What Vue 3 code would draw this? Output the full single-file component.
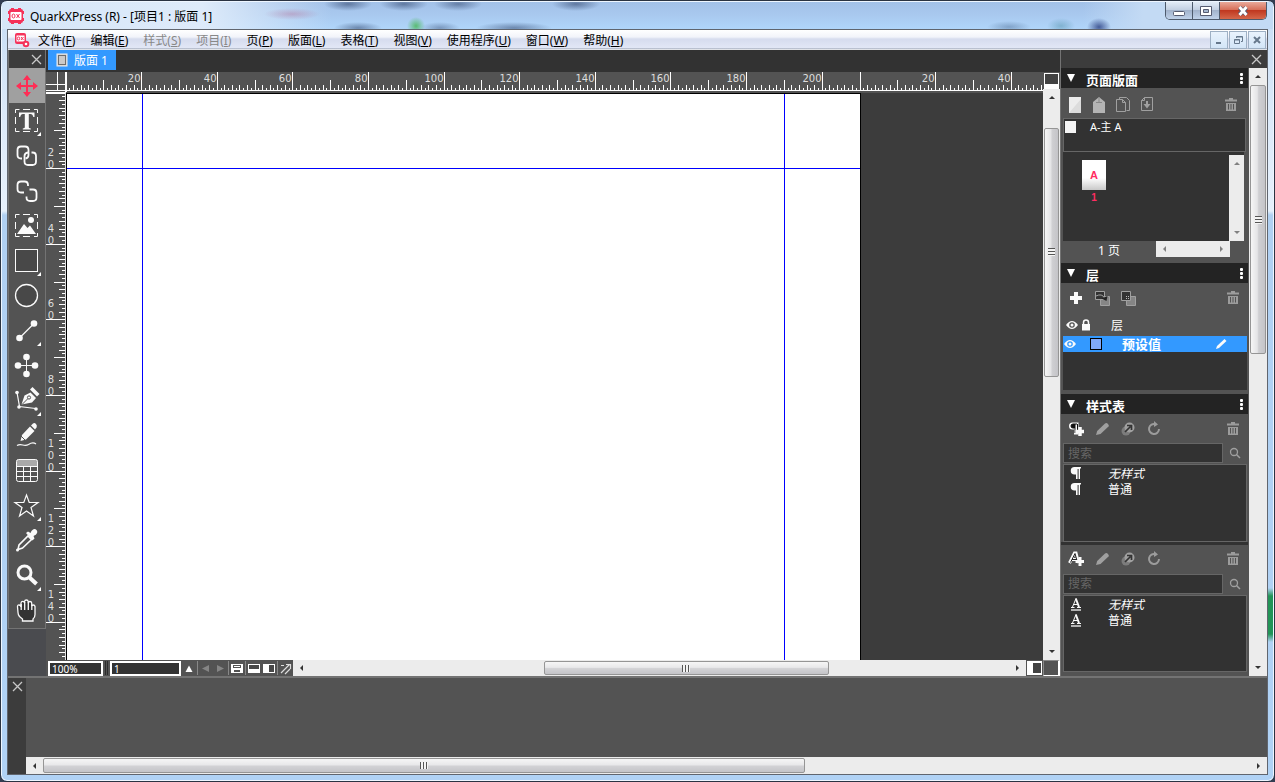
<script setup>
import { computed, onBeforeUnmount, onMounted, ref } from 'vue'

const menus = [
  { label: '文件', key: 'F' },
  { label: '编辑', key: 'E' },
  { label: '样式', key: 'S', disabled: true },
  { label: '项目', key: 'I', disabled: true },
  { label: '页', key: 'P' },
  { label: '版面', key: 'L' },
  { label: '表格', key: 'T' },
  { label: '视图', key: 'V' },
  { label: '使用程序', key: 'U' },
  { label: '窗口', key: 'W' },
  { label: '帮助', key: 'H' },
]

const frame = '<path d="M6.500 10V6.500h4M14 6.500h7M25 6.500h3.500V10M28.500 14v7M28.500 25v3.500H25M21 28.500h-7M10.500 28.500H6.500V25M6.500 21v-7" fill="none" stroke="#fafafa"/>'
const tools = [
  { name: '移动工具', art: '<path d="M18 9v18M9 18h18" stroke="#ff2d55" stroke-width="2" fill="none"/><path d="M18 7l-4 5h8zM18 29l-4-5h8zM7 18l5-4v8zM29 18l-5-4v8z" fill="#ff2d55"/>' },
  { name: '文本工具', more: true, art: frame + '<path d="M10 9.500h15.500v4.500h-1.200c-.4-2-1.300-3-2.800-3h-1.700v13c0 1 .7 1.400 2 1.500v1h-8v-1c1.300-.1 2-.5 2-1.500V11H14c-1.500 0-2.400 1-2.800 3H10z" fill="#fafafa"/>' },
  { name: '链接工具', art: '<g fill="none" stroke="#fafafa" stroke-width="1.800"><path d="M13 20.500h-1q-3.500 0-3.500-3.500v-5q0-3.500 3.500-3.500h4q3.500 0 3.500 3.500v5q0 3-3 3.500"/><path d="M22.500 14.500h1q3.500 0 3.500 3.500v5.500q0 3.500-3.500 3.500H19q-3.500 0-3.500-3.500V18q0-3 3.500-3.500"/></g>' },
  { name: '取消链接工具', art: '<g fill="none" stroke="#fafafa" stroke-width="1.800"><path d="M15 19.500h-3q-3.500 0-3.500-3.500v-4q0-3.500 3.500-3.500h3.500q3.500 0 3.500 3.500v1"/><path d="M20.500 16.500H24q3.500 0 3.500 3.500v4.500q0 3.500-3.500 3.500h-3q-3.500 0-3.500-3.500v-1"/></g>' },
  { name: '图片工具', art: frame + '<path d="M8 26l7-10 3.500 4 2.500-2.500 6 8.500z" fill="#fafafa"/><circle cx="22" cy="12" r="3" fill="#fafafa"/>' },
  { name: '矩形工具', more: true, art: '<rect x="6.500" y="6.500" width="22" height="22" fill="#484848" stroke="#fafafa"/>' },
  { name: '椭圆工具', art: '<circle cx="17.500" cy="17.500" r="11" fill="#484848" stroke="#fafafa" stroke-width="1.300"/>' },
  { name: '直线工具', more: true, art: '<path d="M10.500 25L25 10.500" stroke="#fafafa" stroke-width="1.300"/><circle cx="10.500" cy="25" r="3.300" fill="#fafafa"/><circle cx="25" cy="10.500" r="3.300" fill="#fafafa"/>' },
  { name: '点工具', art: '<path d="M17.500 9v17M9 17.500h17" stroke="#fafafa"/><g fill="#fafafa"><circle cx="17.500" cy="9" r="3.300"/><circle cx="17.500" cy="26" r="3.300"/><circle cx="9" cy="17.500" r="3.300"/><circle cx="26" cy="17.500" r="3.300"/></g>' },
  { name: '钢笔工具', more: true, art: '<path d="M8 9.500l2.500 14 16 2" fill="none" stroke="#fafafa" stroke-width="1.200"/><g fill="#fafafa"><circle cx="8" cy="9.500" r="1.800"/><circle cx="10" cy="24" r="1.800"/><circle cx="27" cy="26" r="1.800"/><path d="M12.500 21.500l3-9 6-3 5.500 5.500-4 4.500z"/><path d="M21 6.500l2.500-2.500 7 7-2.500 2.500z"/></g><path d="M13 21.500l6-6" stroke="#535353"/><circle cx="20" cy="14.500" r="1.600" fill="#fafafa" stroke="#535353"/>' },
  { name: '铅笔工具', art: '<path d="M11.500 23l1.500-6L21 8.500l4.500 4.500-8.500 8.500z" fill="#fafafa"/><path d="M22 7.500l2-2q1.500-1 3 .5t.5 3.500l-1.500 2z" fill="#fafafa"/><path d="M12 18l4 4" stroke="#535353"/><path d="M8 27.500c5-3 6.500 2 11.500-1 3-2 5.500-2 7.500-.5" fill="none" stroke="#fafafa" stroke-width="1.200"/>' },
  { name: '表格工具', art: '<path d="M7.500 13.500v-5q0-2 2-2h17q2 0 2 2v5z" fill="#a9a9a9"/><rect x="7.500" y="6.500" width="21" height="22" rx="2" fill="none" stroke="#fafafa"/><path d="M7.500 13.500h21M7.500 18.500h21M7.500 23.500h21M14.500 13.500v15M21.500 13.500v15" stroke="#fafafa" fill="none"/>' },
  { name: '星形工具', more: true, art: '<path d="M17.500 7l2.700 7.500H29l-7 5 2.500 8.500-7-5-7 5 2.500-8.500-7-5h8.800z" fill="#484848" stroke="#fafafa" stroke-width="1.200"/>' },
  { name: '吸管工具', art: '<path d="M9 26.500l1-4.500 9-9 3.500 3.500-9 8.500z" fill="none" stroke="#fafafa" stroke-width="1.600"/><path d="M17 10l2-1.500 2.500 1.500c2-4.500 4.500-4.500 6-3s1 4.500-3 6l1 2.500-2 2z" fill="#fafafa"/><circle cx="8.500" cy="27" r="1.500" fill="#fafafa"/>' },
  { name: '缩放工具', more: true, art: '<circle cx="15.500" cy="14.500" r="6.500" fill="none" stroke="#fafafa" stroke-width="3"/><path d="M20.500 19.500l7 6.500" stroke="#fafafa" stroke-width="4"/>' },
  { name: '抓手工具', art: '<path d="M9 19.500l-.5-6q.2-1.800 1.700-1.500t1.800 2v-4q.3-1.600 1.800-1.600t1.700 1.600V8.600q.3-1.600 1.900-1.600t1.800 1.600V10q.3-1.500 1.800-1.500t1.700 1.500v3q.2-1 1.600-1t1.700 1.500v8q0 3-2 4.500v2H13.500V26l-3-2.500q-1.500-2-1.500-4z" fill="#333" stroke="#fafafa" stroke-width="1.300"/><path d="M12.200 11v6M15.700 9v8M19.300 9.500v7.500M22.800 12v5" stroke="#fafafa" stroke-width="1.300"/>' },
]
const active = ref(0)

const trash = '<path d="M2 3.500h12M6 2h4" stroke="#9c9c9c" stroke-width="1.800" fill="none"/><path d="M3 6h10v8H3z" fill="#9c9c9c"/><path d="M5.500 7v5.500M8 7v5.500M10.500 7v5.500" stroke="#535353"/>'
const pencil = '<path d="M2 14l1.200-4L11 2.500Q12.500 1.500 14 3t.5 2.500L6.500 13z" fill="#a0a0a0"/>'
const dup = '<circle cx="6" cy="10" r="4.500" fill="#7c7c7c"/><circle cx="9.500" cy="6.500" r="5" fill="#a0a0a0"/><path d="M5 11l5.500-5.500M7 4.500h4.500V9" stroke="#333" stroke-width="1.700" fill="none"/>'
const reload = '<path d="M9.500 3.200A5 5 0 1 0 13 8" fill="none" stroke="#9c9c9c" stroke-width="2"/><path d="M8 0v6l4-2.500z" fill="#9c9c9c"/>'

const pageTools = [
  { name: '单面主页', art: '<path d="M2 1h12v16H2z" fill="#ececec"/><path d="M2 17L14 3v14z" fill="#dcdcdc"/>' },
  { name: '对页主页', art: '<path d="M2 17V6l6-5 6 5v11z" fill="#b4b4b4"/><path d="M8 1v5M5 6.500h6" stroke="#888"/>' },
  { name: '复制', art: '<path d="M4.500 3.500V1.500h7l3 3v10h-3" fill="none" stroke="#a0a0a0"/><path d="M1.500 3.500h6l3 3v9h-9zM7.500 3.500v3h3" fill="none" stroke="#a0a0a0"/>' },
  { name: '插入', art: '<path d="M2.500 4.500l3-3h8v13h-11z" fill="none" stroke="#a0a0a0"/><path d="M2.500 4.500h3v-3" fill="none" stroke="#a0a0a0"/><path d="M7 5h2v3h2.500L8 12.500 4.500 8H7z" fill="#a0a0a0"/>' },
]
const layerTools = [
  { name: '新建层', art: '<path d="M8 2v12M2 8h12" stroke="#fafafa" stroke-width="4"/>' },
  { name: '移动到层', art: '<path d="M6.500 6.500h9v9h-9z" fill="#858585" stroke="#a0a0a0"/><path d="M1.500 1.500h9v8h-9z" fill="#333" stroke="#a0a0a0"/><path d="M2 6q6-3 8.500 2" stroke="#a0a0a0" fill="none"/><path d="M7.500 8.500l5 2.500 1-5z" fill="#232323"/>' },
  { name: '合并层', art: '<path d="M6.500 6.500h9v9h-9z" fill="#858585" stroke="#a0a0a0"/><path d="M1.500 1.500h9v9h-9z" fill="#333" stroke="#a0a0a0"/><path d="M6 6.500h1M8 6.500h1M6 8.500h1M8 8.500h1" stroke="#bbb"/>' },
]
const styleGroups = [
  {
    id: 'para',
    add: '<path d="M10.500 1.500H4.500a3.500 3.500 0 0 0 0 7H6v5h4.500z" fill="#fafafa"/><path d="M9 3H5a2 2 0 0 0 0 4h1.500V3M7 3v9M9.500 3v9" fill="#111" stroke="#111"/><path d="M12 6v9M7.500 10.500h9" stroke="#fafafa" stroke-width="3.500"/>',
    mark: '<path d="M13 2H6.500a3.700 3.700 0 0 0 0 7.500H8V14h1.600V4h1V14H12V3.500h1z" fill="#fafafa"/>',
  },
  {
    id: 'char',
    add: '<path d="M1.500 12L6.500 2h1.500l2.500 10M3.500 8.500h6" fill="none" stroke="#fafafa" stroke-width="3"/><path d="M2.500 11.500L7 2.500l2.500 9M4 8.500h5" fill="none" stroke="#232323" stroke-width="1"/><path d="M12 6v9M7.500 10.500h9" stroke="#fafafa" stroke-width="3"/>',
    mark: '<path d="M4.500 11L8 2.500M5.500 8.500h5" fill="none" stroke="#fafafa"/><path d="M7.800 2.500L11 11" stroke="#fafafa" stroke-width="2"/><path d="M3 11.500h3.500M9 11.500h4" stroke="#fafafa"/><path d="M3 14h10" stroke="#fafafa" stroke-width="1.300"/>',
  },
]
const styleTools = [
  { name: '编辑', art: pencil },
  { name: '复制', art: dup },
  { name: '更新', art: reload },
]
const styleRows = [{ name: '无样式', plain: true }, { name: '普通' }]

// One ruler unit is one millimetre at the current zoom level.
const UNIT = 794 / 210
function ticks(from, to, origin, limit) {
  const list = []
  for (let i = from; i <= to; i++) {
    const at = Math.floor(origin + i * UNIT) + 0.5
    if (at >= limit) break
    list.push({
      at,
      size: i % 20 === 0 ? 20 : i % 10 === 0 ? 11 : i % 2 === 0 ? 6 : 3,
      label: i > 0 && i % 20 === 0 ? String(i) : '',
    })
  }
  return list
}
const view = ref(null)
const size = ref({ w: 0, h: 0 })
let observer
onMounted(() => {
  const read = () => {
    size.value = { w: view.value.clientWidth, h: view.value.clientHeight - 21 }
  }
  read()
  observer = new ResizeObserver(read)
  observer.observe(view.value)
})
onBeforeUnmount(() => observer.disconnect())
const hTicks = computed(() => [...ticks(1, 209, 20, size.value.w), ...ticks(0, 999, 814, size.value.w)])
const vTicks = computed(() => ticks(0, 999, 0, size.value.h))
</script>

<template>
  <div class="window">
    <header class="titlebar">
      <svg class="logo" width="16" height="16" viewBox="0 0 16 16" aria-hidden="true">
        <rect x="1" y="1" width="14" height="14" rx="2" fill="#f5325a" />
        <path d="M3 .5h3M10 .5h3M3 15.500h3M10 15.500h3M.5 3v3M.5 10v3M15.500 3v3M15.500 10v3" stroke="#f5325a" />
        <rect x="2.500" y="4" width="11" height="8" rx="1" fill="#fff" />
        <ellipse cx="5.500" cy="8" rx="1.500" ry="2" fill="none" stroke="#f5325a" />
        <path d="M8.500 6l3 4M11.500 6l-3 4" stroke="#f5325a" />
      </svg>
      <h1>QuarkXPress (R) - [项目1 : 版面 1]</h1>
      <div class="ghosts"></div>
      <div class="wincontrols">
        <button type="button" aria-label="最小化"><svg width="14" height="12" viewBox="0 0 14 12"><rect x="1.500" y="6.500" width="11" height="4" rx="1" fill="#fff" stroke="#555b70" /></svg></button>
        <button type="button" aria-label="最大化"><svg width="14" height="12" viewBox="0 0 14 12"><path d="M1.500 1.500h11v9h-11zM4.500 4.500v3h5v-3z" fill="#fff" fill-rule="evenodd" stroke="#555b70" /></svg></button>
        <button type="button" class="close" aria-label="关闭"><svg width="14" height="12" viewBox="0 0 14 12"><path d="M3.500 2.500l7 7M10.500 2.500l-7 7" stroke="#555b70" stroke-width="4.500" /><path d="M3.500 2l7 8M10.500 2l-7 8" stroke="#fff" stroke-width="2.800" /></svg></button>
      </div>
    </header>

    <div class="client">
      <nav class="menubar">
        <svg class="doclogo" width="16" height="16" viewBox="0 0 16 16" aria-hidden="true">
          <rect x="1" y="1" width="11" height="11" rx="2" fill="#f5325a" />
          <rect x="2.500" y="3.500" width="8" height="6" fill="#fff" />
          <ellipse cx="4.500" cy="6.500" rx="1.200" ry="1.500" fill="none" stroke="#f5325a" />
          <path d="M7 5l2.500 3M9.500 5L7 8" stroke="#f5325a" />
          <circle cx="12" cy="12" r="3.300" fill="#f5325a" />
          <circle cx="12" cy="12" r="1.300" fill="#fff" />
        </svg>
        <button v-for="m in menus" :key="m.key" type="button" class="menu" :disabled="m.disabled">{{ m.label }}(<u>{{ m.key }}</u>)</button>
        <div class="mdi">
          <button type="button" aria-label="最小化文档"><svg width="10" height="10" viewBox="0 0 10 10"><path d="M2 8h5" stroke="#66788c" stroke-width="2" /></svg></button>
          <button type="button" aria-label="还原文档"><svg width="10" height="10" viewBox="0 0 10 10"><path d="M3.500 3V1.500h6v5H8M1.500 4.500h5v4h-5zM3.500 2h6M1.500 5h5" fill="none" stroke="#66788c" /></svg></button>
          <button type="button" aria-label="关闭文档"><svg width="10" height="10" viewBox="0 0 10 10"><path d="M2 2l6 6M8 2L2 8" stroke="#66788c" stroke-width="2" /></svg></button>
        </div>
      </nav>

      <div class="main">
        <aside class="toolcol">
          <div class="toolbox">
            <div class="grip">
              <button type="button" class="x" aria-label="关闭工具"><svg width="11" height="11" viewBox="0 0 11 11"><path d="M1 1l9 9M10 1l-9 9" stroke="#c8c8c8" stroke-width="1.300" /></svg></button>
            </div>
            <button
              v-for="(t, i) in tools"
              :key="t.name"
              type="button"
              class="tool"
              :class="{ on: i === active, more: t.more }"
              :aria-label="t.name"
              @click="active = i"
            ><svg width="36" height="35" viewBox="0 0 36 35" v-html="t.art" /></button>
          </div>
        </aside>

        <section class="workspace">
          <div class="tabs">
            <button type="button" class="tab">
              <svg width="12" height="14" viewBox="0 0 12 14"><rect x="1" y="1" width="10" height="12" fill="#c4c4c4" stroke="#eee" /><rect x="2.500" y="2.500" width="7" height="9" fill="#c9c9c9" stroke="#6d6d6d" /></svg>
              <span>版面 1</span>
            </button>
          </div>

          <div class="stage">
            <div ref="view" class="view">
              <svg class="hruler" width="100%" height="21" shape-rendering="crispEdges">
                <path d="M11.500 0v19M0 12.500h20" stroke="#fff" />
                <rect x="19" width="2" height="20" fill="#fff" />
                <g v-for="(t, i) in hTicks" :key="i">
                  <line :x1="t.at" :x2="t.at" :y1="19 - t.size" y2="19" stroke="#fff" />
                  <text v-if="t.label" :x="t.at - 1" y="10" text-anchor="end" class="digits">{{ t.label }}</text>
                </g>
                <path d="M0 18.500h4000" stroke="#fff" />
                <path d="M0 20.500h20" stroke="#fff" />
              </svg>
              <div class="deck">
                <svg class="vruler" width="20" height="100%" shape-rendering="crispEdges">
                  <g v-for="(t, i) in vTicks" :key="i">
                    <line :y1="t.at" :y2="t.at" :x1="19 - t.size" x2="19" stroke="#fff" />
                    <template v-if="t.label">
                      <text v-for="(d, n) in t.label" :key="n" x="5" :y="t.at - 1 - (t.label.length - 1 - n) * 12" text-anchor="middle" class="digits">{{ d }}</text>
                    </template>
                  </g>
                  <path d="M19.500 0v4000" stroke="#ddd" />
                </svg>
                <div class="pasteboard">
                  <div class="page">
                    <i class="guide left"></i>
                    <i class="guide right"></i>
                    <i class="guide top"></i>
                  </div>
                </div>
              </div>
            </div>
            <div class="vside">
              <button type="button" class="split" aria-label="水平拆分"></button>
              <div class="bar v">
                <button type="button" class="arrow up" aria-label="向上滚动"></button>
                <div class="track"><i class="t1"></i><b class="thumb t2"></b><i class="t3"></i></div>
                <button type="button" class="arrow down" aria-label="向下滚动"></button>
              </div>
            </div>
          </div>

          <div class="status">
            <input class="field zoom" value="100%" aria-label="缩放比例" />
            <i class="sep"></i>
            <input class="field pageno" value="1" aria-label="页码" />
            <button type="button" class="sbtn" aria-label="选择页"><svg width="16" height="14" viewBox="0 0 16 14"><path d="M8 3.500L11.500 10h-7z" fill="#fff" /></svg></button>
            <i class="line"></i>
            <button type="button" class="sbtn" aria-label="上一页"><svg width="15" height="14" viewBox="0 0 15 14"><path d="M11 3v7L4 6.500z" fill="#858585" /></svg></button>
            <button type="button" class="sbtn" aria-label="下一页"><svg width="15" height="14" viewBox="0 0 15 14"><path d="M4 3v7l7-3.500z" fill="#858585" /></svg></button>
            <i class="line"></i>
            <button type="button" class="sbtn" aria-label="母版页"><svg width="16" height="14" viewBox="0 0 16 14"><path d="M2 2h12v9H2z" fill="#fff" /><path d="M4 3h8v3H4zM5 8h6v2H5z" fill="#535353" /><path d="M5 4h6v1H5z" fill="#fff" /></svg></button>
            <i class="line"></i>
            <button type="button" class="sbtn" aria-label="水平拆分窗口"><svg width="15" height="14" viewBox="0 0 15 14"><path d="M2 2h12v9H2z" fill="#fff" /><path d="M3 3h10v4H3z" fill="#484848" /></svg></button>
            <button type="button" class="sbtn" aria-label="垂直拆分窗口"><svg width="16" height="14" viewBox="0 0 16 14"><path d="M2 2h12v9H2z" fill="#fff" /><path d="M8 3h5v7H8z" fill="#484848" /></svg></button>
            <i class="line"></i>
            <button type="button" class="sbtn" aria-label="导出"><svg width="15" height="14" viewBox="0 0 15 14"><path d="M3 3.500h3M3 11l8.500-8.500M8 2.500h4.500V7M7 12l5-5" fill="none" stroke="#ddd" stroke-width="1.200" /></svg></button>
            <div class="bar h fill">
              <button type="button" class="arrow back" aria-label="向左滚动"></button>
              <div class="track"><i class="u1"></i><b class="thumb u2"></b><i class="u3"></i></div>
              <button type="button" class="arrow fwd" aria-label="向右滚动"></button>
            </div>
            <button type="button" class="split side" aria-label="垂直拆分"></button>
            <i class="corner"></i>
          </div>
        </section>

        <aside class="palettes">
          <div class="grip">
            <button type="button" class="x" aria-label="关闭面板"><svg width="11" height="11" viewBox="0 0 11 11"><path d="M1 1l9 9M10 1l-9 9" stroke="#c8c8c8" stroke-width="1.300" /></svg></button>
          </div>
          <div class="palbody">
            <div class="pallist">
              <section class="palette">
                <header><i class="fold"></i><h2>页面版面</h2><button type="button" class="dots" aria-label="菜单"><i></i><i></i><i></i></button></header>
                <div class="icons tight">
                  <button v-for="t in pageTools" :key="t.name" type="button" class="ico" :aria-label="t.name"><svg width="16" height="18" viewBox="0 0 16 18" v-html="t.art" /></button>
                  <button type="button" class="ico end" aria-label="删除"><svg width="16" height="16" viewBox="0 0 16 16" v-html="trash" /></button>
                </div>
                <div class="masters"><i class="swatch"></i><span>A-主 A</span></div>
                <div class="pages">
                  <div class="sheets">
                    <div class="sheet"><b>A</b><span>1</span></div>
                  </div>
                  <div class="bar v dim">
                    <button type="button" class="arrow up" aria-label="向上"></button>
                    <div class="track"></div>
                    <button type="button" class="arrow down" aria-label="向下"></button>
                  </div>
                </div>
                <div class="count">
                  <span>1 页</span>
                  <div class="bar h dim">
                    <button type="button" class="arrow back" aria-label="向左"></button>
                    <div class="track"></div>
                    <button type="button" class="arrow fwd" aria-label="向右"></button>
                  </div>
                </div>
              </section>

              <section class="palette">
                <header><i class="fold"></i><h2>层</h2><button type="button" class="dots" aria-label="菜单"><i></i><i></i><i></i></button></header>
                <div class="icons">
                  <button v-for="t in layerTools" :key="t.name" type="button" class="ico" :aria-label="t.name"><svg width="16" height="16" viewBox="0 0 16 16" v-html="t.art" /></button>
                  <button type="button" class="ico end" aria-label="删除层"><svg width="16" height="16" viewBox="0 0 16 16" v-html="trash" /></button>
                </div>
                <div class="layerhead">
                  <svg width="12" height="10" viewBox="0 0 12 10"><path d="M0 5q6-8 12 0-6 8-12 0z" fill="#fafafa" /><circle cx="6" cy="5" r="2.800" fill="#535353" /><circle cx="6" cy="5" r="1.500" fill="#fafafa" /></svg>
                  <svg width="12" height="12" viewBox="0 0 12 12"><path d="M2 5h8v6.500H2z" fill="#fafafa" /><path d="M3.500 6V3.500Q3.500 1 6 1t2.500 2.500V6" fill="none" stroke="#fafafa" stroke-width="1.500" /></svg>
                  <span>层</span>
                </div>
                <div class="layers">
                  <div class="layer">
                    <svg width="12" height="10" viewBox="0 0 12 10"><path d="M0 5q6-8 12 0-6 8-12 0z" fill="#fafafa" /><circle cx="6" cy="5" r="2.800" fill="#3399ff" /><circle cx="6" cy="5" r="1.500" fill="#fafafa" /></svg>
                    <i class="color"></i>
                    <strong>预设值</strong>
                    <svg class="pen" width="12" height="12" viewBox="0 0 12 12"><path d="M1 11l1-3L9.500 1 11.500 3 4 10z" fill="#fafafa" /></svg>
                  </div>
                </div>
              </section>

              <section class="palette grow">
                <header><i class="fold"></i><h2>样式表</h2><button type="button" class="dots" aria-label="菜单"><i></i><i></i><i></i></button></header>
                <div v-for="g in styleGroups" :key="g.id" class="styles">
                  <div class="icons small">
                    <button type="button" class="ico" aria-label="新建"><svg width="16" height="16" viewBox="0 0 16 16" v-html="g.add" /></button>
                    <button v-for="t in styleTools" :key="t.name" type="button" class="ico" :aria-label="t.name"><svg width="16" height="16" viewBox="0 0 16 16" v-html="t.art" /></button>
                    <button type="button" class="ico end" aria-label="删除"><svg width="16" height="16" viewBox="0 0 16 16" v-html="trash" /></button>
                  </div>
                  <div class="search">
                    <input type="text" placeholder="搜索" aria-label="搜索样式" />
                    <svg width="12" height="12" viewBox="0 0 12 12"><circle cx="5" cy="5" r="3.500" fill="none" stroke="#a0a0a0" stroke-width="1.300" /><path d="M7.500 7.500L11 11" stroke="#a0a0a0" stroke-width="1.500" /></svg>
                  </div>
                  <ul class="stylelist">
                    <li v-for="r in styleRows" :key="r.name">
                      <svg width="16" height="16" viewBox="0 0 16 16" v-html="g.mark" />
                      <em v-if="r.plain">{{ r.name }}</em>
                      <span v-else>{{ r.name }}</span>
                    </li>
                  </ul>
                </div>
              </section>
            </div>
            <div class="bar v wide">
              <button type="button" class="arrow up" aria-label="向上滚动面板"></button>
              <div class="track"><b class="thumb p1"></b><i class="p2"></i></div>
              <button type="button" class="arrow down" aria-label="向下滚动面板"></button>
            </div>
          </div>
        </aside>
      </div>

      <footer class="dock">
        <div class="dockgrip">
          <button type="button" class="x" aria-label="关闭"><svg width="11" height="11" viewBox="0 0 11 11"><path d="M1 1l9 9M10 1l-9 9" stroke="#c8c8c8" stroke-width="1.300" /></svg></button>
        </div>
        <div class="dockbody">
          <div class="bar h tall">
            <button type="button" class="arrow back" aria-label="向左滚动"></button>
            <div class="track"><b class="thumb d1"></b><i class="d2"></i></div>
            <button type="button" class="arrow fwd" aria-label="向右滚动"></button>
          </div>
        </div>
      </footer>
    </div>
  </div>
</template>

<style>
body {
  background: #333d52;
}
</style>

<style scoped>
* {
  box-sizing: border-box;
}
.window {
  display: flex;
  flex-direction: column;
  height: 100vh;
  padding: 0 6px 6px;
  overflow: hidden;
  border: 1px solid #2a3342;
  border-radius: 7px;
  box-shadow: inset 0 0 0 1px #eef6ff;
  background:
    linear-gradient(transparent, #239457 8px, #239457 46px, transparent) right 587px / 6px 54px no-repeat,
    linear-gradient(#c6dcf4 0, #dbe9f9 110px, #e6f0fb 210px, #b0d0f2 214px, #b0d2f5 100%);
  font: 12px "Noto Sans", "Noto Sans CJK SC", sans-serif;
  color: #fff;
}
button {
  display: flex;
  align-items: center;
  justify-content: center;
  margin: 0;
  padding: 0;
  border: 0;
  background: none;
  color: inherit;
  font: inherit;
}
svg {
  display: block;
  flex: none;
}

.titlebar {
  display: flex;
  align-items: center;
  gap: 6px;
  flex: none;
  height: 27px;
  margin: 1px -5px 0;
  padding-left: 6px;
  color: #000;
  background: linear-gradient(90deg, #d6e6f8 0, #deebfa 200px, transparent 330px, transparent calc(100% - 190px), #c3daf4 calc(100% - 130px)), linear-gradient(#a2c1e8 0, #a8c8ee 12px, #b0d5fa 100%);
}
h1 {
  margin: 0;
  font-size: 12px;
  font-weight: 400;
  white-space: nowrap;
}
.ghosts {
  flex: 1;
  align-self: stretch;
  background:
    radial-gradient(28px 6px at 74px 12px, rgba(178, 120, 160, 0.45), transparent),
    radial-gradient(24px 7px at 130px 2px, rgba(40, 60, 100, 0.55), transparent),
    radial-gradient(24px 7px at 186px 2px, rgba(40, 60, 100, 0.55), transparent),
    radial-gradient(24px 7px at 240px 2px, rgba(40, 60, 100, 0.5), transparent),
    radial-gradient(24px 7px at 358px 2px, rgba(40, 60, 100, 0.55), transparent),
    radial-gradient(24px 6px at 140px 26px, rgba(40, 60, 100, 0.5), transparent),
    radial-gradient(9px 9px at 198px 24px, rgba(60, 180, 70, 0.75), transparent),
    radial-gradient(20px 6px at 222px 26px, rgba(40, 60, 100, 0.4), transparent),
    radial-gradient(38px 6px at 296px 26px, rgba(40, 60, 100, 0.5), transparent),
    radial-gradient(22px 6px at calc(100% - 150px) 25px, rgba(60, 90, 130, 0.4), transparent),
    radial-gradient(14px 8px at calc(100% - 98px) 24px, rgba(60, 130, 150, 0.4), transparent),
    radial-gradient(12px 9px at calc(100% - 60px) 25px, rgba(30, 50, 120, 0.75), transparent);
}
.wincontrols {
  display: flex;
  align-self: flex-start;
  height: 18px;
  margin-right: 6px;
  border: 1px solid #4d5a6c;
  border-top: 0;
  border-radius: 0 0 5px 5px;
  overflow: hidden;
}
.wincontrols button {
  width: 27px;
  border-right: 1px solid #4d5a6c;
  background: linear-gradient(#e2ebf6 0, #c3d0e2 45%, #a2b3cc 50%, #bfd2ea 100%);
}
.wincontrols .close {
  width: 46px;
  border-right: 0;
  background: linear-gradient(#e9a99a 0, #d7705a 45%, #c03820 50%, #d5674a 100%);
}

.client {
  display: flex;
  flex: 1;
  flex-direction: column;
  min-height: 0;
  border: 1px solid #60656e;
}
.menubar {
  display: flex;
  align-items: center;
  gap: 15px;
  flex: none;
  height: 20px;
  padding-left: 6px;
  background: linear-gradient(#fff 0, #f2f4fa 35%, #d6dcee 45%, #e2e7f6 90%, #aeb6c8 91%, #f4f4f4 100%);
  color: #000;
}
.doclogo {
  margin-right: -7px;
}
.menu {
  white-space: nowrap;
}
.menu:disabled {
  color: #888;
}
.mdi {
  display: flex;
  gap: 1px;
  margin: 0 1px 0 auto;
}
.mdi button {
  width: 18px;
  height: 18px;
  border: 1px solid #9eb0c4;
  background: linear-gradient(#e9f3fd, #d3e5f7);
}

.main {
  display: flex;
  flex: 1;
  min-height: 0;
}
.grip {
  display: flex;
  align-items: center;
  justify-content: flex-end;
  flex: none;
  height: 18px;
  background: #3c3c3c;
}
.toolcol {
  flex: none;
  width: 38px;
  background: #4a4b4f;
}
.toolbox {
  border: solid #737373;
  border-width: 0 1px 1px;
  background: #535353;
}
.toolbox .grip {
  padding-right: 3px;
}
.tool {
  position: relative;
  width: 36px;
  height: 35px;
}
.tool.on {
  background: #a0a0a0;
}
.tool.more::after {
  position: absolute;
  right: 4px;
  bottom: 2px;
  border: 2px solid transparent;
  border-right-color: #fff;
  border-bottom-color: #fff;
  content: "";
}

.workspace {
  display: flex;
  flex: 1;
  flex-direction: column;
  min-width: 0;
  background: #535353;
}
.tabs {
  display: flex;
  flex: none;
  height: 22px;
  padding-left: 2px;
  background: #323232;
}
.tab {
  gap: 6px;
  width: 68px;
  height: 20px;
  background: #3399ff;
}
.stage {
  display: flex;
  flex: 1;
  min-height: 0;
}
.view {
  display: flex;
  flex: 1;
  flex-direction: column;
  min-width: 0;
}
.hruler {
  background: #535353;
}
.digits {
  fill: #dedede;
  font-family: "DejaVu Sans", sans-serif;
  font-size: 10px;
}
.deck {
  display: flex;
  flex: 1;
  min-height: 0;
}
.pasteboard {
  display: flex;
  flex: 1;
  min-width: 0;
  overflow: hidden;
  background: #3c3c3c;
}
.page {
  position: relative;
  flex: none;
  width: 795px;
  border: 1px solid #000;
  border-bottom: 0;
  background: #fff;
}
.guide {
  position: absolute;
  background: #0000ff;
}
.guide.left,
.guide.right {
  top: 0;
  bottom: 0;
  width: 1px;
}
.guide.left {
  left: 75px;
}
.guide.right {
  right: 75px;
}
.guide.top {
  top: 74px;
  right: 0;
  left: 0;
  height: 1px;
}
.vside {
  display: flex;
  flex: none;
  flex-direction: column;
  width: 17px;
}
.split {
  flex: none;
  width: 15px;
  height: 16px;
  margin: 1px 1px 0;
  border: 1px solid #fff;
  border-bottom-width: 5px;
  background: #424242;
}
.split.side {
  width: 15px;
  height: 14px;
  border-width: 2px 1px 2px 6px;
}
.corner {
  flex: none;
  width: 17px;
  border: 1px solid #888;
  border-right: 2px solid #fff;
  border-bottom-color: #fff;
}

.bar {
  display: flex;
  flex: none;
  background: #ececec;
}
.bar.v {
  flex-direction: column;
  align-items: stretch;
  width: 17px;
}
.vside .bar.v {
  flex: 1;
}
.bar.fill {
  flex: 1;
}
.track {
  display: flex;
  flex: 1;
  min-width: 0;
  min-height: 0;
}
.v .track {
  flex-direction: column;
}
.arrow {
  flex: none;
  width: 17px;
  height: 17px;
}
.arrow::before {
  border: 3px solid transparent;
  content: "";
}
.up::before {
  border-top: 0;
  border-bottom-color: #333;
}
.down::before {
  border-bottom: 0;
  border-top-color: #333;
}
.back::before {
  border-left: 0;
  border-right-color: #333;
}
.fwd::before {
  border-right: 0;
  border-left-color: #333;
}
.dim .up::before {
  border-bottom-color: #808080;
}
.dim .down::before {
  border-top-color: #808080;
}
.dim .back::before {
  border-right-color: #808080;
}
.dim .fwd::before {
  border-left-color: #808080;
}
.thumb {
  display: flex;
  align-items: center;
  justify-content: center;
  border: 1px solid #959595;
  border-radius: 2px;
}
.v .thumb {
  margin: 0 1px;
  background: linear-gradient(90deg, #f6f6f6 0, #e4e4e6 45%, #cfcfd2 55%, #c4c4c8 100%);
}
.h .thumb {
  margin: 1px 0;
  background: linear-gradient(#f6f6f6 0, #e8e8ea 45%, #d2d2d5 55%, #c4c4c8 100%);
}
.v .thumb::after {
  width: 7px;
  height: 8px;
  background: repeating-linear-gradient(#555 0 1px, #f4f4f4 1px 3px);
  content: "";
}
.h .thumb::after {
  width: 8px;
  height: 7px;
  background: repeating-linear-gradient(90deg, #555 0 1px, #f4f4f4 1px 3px);
  content: "";
}
.t1 {
  flex: 22;
}
.t2 {
  flex: 248;
}
.t3 {
  flex: 267;
}
.u1 {
  flex: 234;
}
.u2 {
  flex: 284;
}
.u3 {
  flex: 180;
}
.p1 {
  flex: 268;
}
.p2 {
  flex: 306;
}
.d1 {
  flex: 761;
}
.d2 {
  flex: 445;
}

.status {
  display: flex;
  flex: none;
  height: 16px;
  background: #535353;
}
.status .arrow {
  height: 16px;
}
.field {
  height: 15px;
  margin-top: 1px;
  padding: 0 2px;
  border: 2px solid #fff;
  outline: 0;
  background: #323232;
  color: #fff;
  font: 10px "Noto Sans", sans-serif;
}
.zoom {
  width: 55px;
  margin-left: 2px;
}
.pageno {
  width: 71px;
}
.sep {
  width: 3px;
  margin: 1px 2px;
  border: solid #2c2c2c;
  border-width: 0 1px;
}
.line {
  width: 1px;
  margin: 1px 0;
  background: #888;
}
.sbtn {
  align-items: flex-start;
  padding-top: 2px;
}

.palettes {
  display: flex;
  flex: none;
  flex-direction: column;
  width: 207px;
  border-left: 1px solid #737373;
}
.palettes .grip {
  padding-right: 5px;
}
.palbody {
  display: flex;
  flex: 1;
  min-height: 0;
}
.pallist {
  display: flex;
  flex: 1;
  flex-direction: column;
  min-width: 0;
  padding-right: 1px;
  background: #535353;
}
.palette {
  margin-bottom: 4px;
}
.palette.grow {
  display: flex;
  flex: 1;
  flex-direction: column;
  min-height: 0;
}
.palette header {
  display: flex;
  align-items: flex-start;
  height: 20px;
  padding: 0 5px 0 6px;
  background: #232323;
}
.fold {
  margin-top: 6px;
  border: solid transparent;
  border-width: 8px 4px 0;
  border-top-color: #fff;
}
h2 {
  flex: 1;
  margin: 3px 0 0 11px;
  font-size: 13px;
  font-weight: 700;
  line-height: 18px;
}
.dots {
  flex-direction: column;
  gap: 1px;
  margin-top: 5px;
}
.dots i {
  width: 3px;
  height: 3px;
  border-radius: 1px;
  background: #fff;
}
.icons {
  display: flex;
  align-items: center;
  gap: 10px;
  height: 30px;
  padding: 0 7px;
}
.icons.tight {
  gap: 8px;
  padding: 4px 9px 0 6px;
}
.icons .end {
  margin-left: auto;
}
.masters {
  display: flex;
  gap: 14px;
  height: 34px;
  margin: 0 2px 0 2px;
  padding: 1px;
  border: 1px solid #666;
  background: #323232;
  font-size: 11px;
  line-height: 14px;
}
.swatch {
  width: 11px;
  height: 12px;
  margin-top: 1px;
  background: #f5f5f5;
}
.pages {
  display: flex;
  height: 89px;
  margin: 0 4px 0 2px;
  background: #323232;
}
.sheets {
  flex: 1;
  padding: 8px 19px;
}
.sheet {
  display: flex;
  flex-direction: column;
  align-items: center;
  width: 24px;
  color: #ff2d62;
  font: bold 10px/15px "Liberation Sans", sans-serif;
}
.sheet b {
  width: 24px;
  height: 30px;
  background: linear-gradient(#fff 60%, #c9c9c9);
  font-size: 11px;
  line-height: 30px;
  text-align: center;
}
.pages .bar {
  width: 15px;
  margin-top: 3px;
}
.pages .arrow {
  width: 15px;
}
.count {
  display: flex;
  align-items: flex-start;
  justify-content: space-between;
  height: 18px;
  padding: 0 18px 0 37px;
}
.count .bar {
  width: 74px;
  height: 16px;
}
.count .arrow {
  height: 16px;
}
.layerhead {
  display: flex;
  align-items: center;
  gap: 2px;
  height: 23px;
  padding-left: 5px;
}
.layerhead span {
  padding-left: 17px;
}
.layers {
  height: 54px;
  margin: 0 1px 0 2px;
  background: #323232;
}
.layer {
  display: flex;
  align-items: center;
  height: 16px;
  padding: 0 20px 0 1px;
  background: #3399ff;
}
.color {
  width: 12px;
  height: 12px;
  margin: 0 20px 0 14px;
  border: 1px solid #000;
  background: #80a8f8;
}
.layer strong {
  flex: 1;
  font-size: 13px;
  line-height: 16px;
}
.styles {
  display: flex;
  flex: 1;
  flex-direction: column;
}
.styles + .styles {
  border-top: 3px solid #323232;
}
.icons.small {
  height: 29px;
}
.search {
  display: flex;
  align-items: center;
  gap: 6px;
  height: 20px;
  padding: 0 7px 0 2px;
}
.search input {
  flex: 1;
  min-width: 0;
  height: 20px;
  padding: 0 4px;
  border: 1px solid #666;
  outline: 0;
  background: #323232;
  color: #fff;
  font: inherit;
}
.search input::placeholder {
  color: #666;
}
.stylelist {
  flex: 1;
  margin: 1px 1px 0 2px;
  padding: 0 4px;
  border: 1px solid #666;
  background: #323232;
  list-style: none;
}
.stylelist li {
  display: flex;
  align-items: center;
  gap: 24px;
  height: 16px;
}
.bar.wide {
  width: 18px;
}
.bar.wide .arrow {
  width: 18px;
}

.dock {
  display: flex;
  flex: none;
  height: 98px;
  border-top: 2px solid #737373;
}
.dockgrip {
  flex: none;
  width: 18px;
  padding: 3px 0 0 4px;
  background: #3c3c3c;
}
.dockbody {
  display: flex;
  flex: 1;
  flex-direction: column;
  justify-content: flex-end;
  background: #535353;
}
.bar.tall {
  height: 17px;
}
</style>
